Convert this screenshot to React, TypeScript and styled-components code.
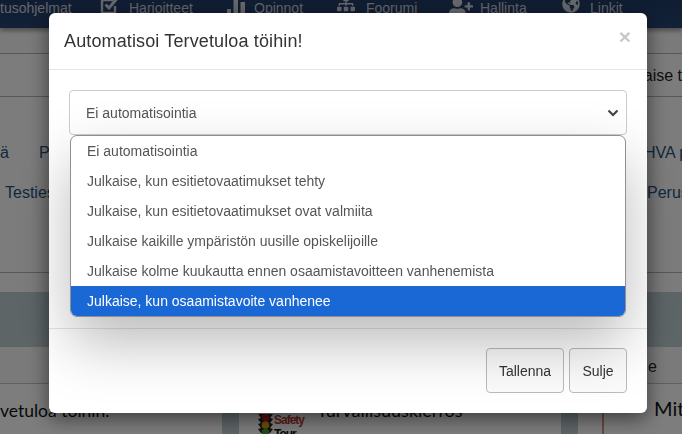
import { createGlobalStyle, styled } from 'styled-components';
import { FaSitemap, FaUserPlus, FaGlobeAmericas } from 'react-icons/fa';

const GlobalStyle = createGlobalStyle`
  html, body {
    margin: 0;
    height: 434px;
    overflow: hidden;
    background: #fff;
    font-family: "Liberation Sans", Arial, sans-serif;
  }
`;

const Page = styled.div`
  width: 682px;
  height: 434px;
  overflow: hidden;
  color: #222;
`;

const Nav = styled.nav`
  display: flex;
  height: 28px;
  overflow: hidden;
  background: linear-gradient(#1f3a66, #27436f);
  box-shadow: 0 3px 4px rgba(0, 0, 0, 0.35);
  position: relative;
`;

interface NavItemProps {
  $width: number;
  $gap?: number;
}

const NavItem = styled.div<NavItemProps>`
  flex: 0 0 ${({ $width }) => $width}px;
  display: flex;
  align-items: flex-start;
  gap: ${({ $gap = 11 }) => $gap}px;
  font-size: 14px;
  line-height: 17px;
  color: #c8ced5;
  white-space: nowrap;

  svg {
    flex: none;
    margin-top: -5px;
    color: #cfd4da;
  }
`;

const TopRow = styled.div`
  height: 25px;
  background: #f4f4f4;
  border-bottom: 1px solid #b0b0b0;
`;

const TitleRow = styled.div`
  height: 43px;
  display: flex;
  justify-content: flex-end;
  align-items: center;
  padding-top: 1px;
  box-sizing: border-box;
  background: #f8f8f8;
  border-bottom: 1px solid #b0b0b0;
  font-size: 16px;
  overflow: hidden;
`;

const TitleEnd = styled.span`
  flex: 0 0 35px;
  white-space: nowrap;
`;

const LinkPanel = styled.div`
  height: 176px;
  display: flex;
  flex-flow: column nowrap;
  gap: 21px;
  padding-top: 46px;
  box-sizing: border-box;
  background: #f8f8f8;
  border-bottom: 1px solid #b0b0b0;
`;

interface LinkRowProps {
  $columns: string;
}

const LinkRow = styled.div<LinkRowProps>`
  display: grid;
  grid-template-columns: ${({ $columns }) => $columns};
  font-size: 16px;
  line-height: 19px;
  color: #24527f;
  white-space: nowrap;
  overflow: hidden;
`;

const Spacer = styled.div`
  height: 19px;
  background: #f8f8f8;
`;

const TealBand = styled.div`
  height: 55px;
  background: #bccbce;
`;

const NoteRow = styled.div`
  height: 37px;
  display: flex;
  justify-content: flex-end;
  padding: 11px 0 0;
  box-sizing: border-box;
  background: #f4f4f4;
  border-bottom: 1px solid #c0c0c0;
  font-size: 16px;
`;

const NoteEnd = styled.span`
  flex: 0 0 34px;
`;

const Tiles = styled.div`
  display: grid;
  grid-template-columns: 222px 322px 1fr;
  gap: 17px;
  height: 60px;
  background: #bccbce;
`;

const Tile = styled.div`
  display: flex;
  background: #fbfbfb;
  overflow: hidden;
`;

interface TileTextProps {
  $size?: number;
}

const TileText = styled.span<TileTextProps>`
  font-family: Lato, "Open Sans", sans-serif;
  font-size: ${({ $size = 20 }) => $size}px;
  line-height: 24px;
  color: #111;
  white-space: nowrap;
`;

const FirstTile = styled(Tile)`
  padding: 15px 0 0 0;
`;

const SafetyTile = styled(Tile)`
  padding: 14px 0 0 18px;
  gap: 13px;
`;

const Logo = styled.div`
  flex: 0 0 44px;
  display: flex;
  gap: 0;
  padding-top: 15px;
`;

const LogoWords = styled.div`
  font-size: 12px;
  line-height: 14px;
  font-weight: bold;
  letter-spacing: -1px;
  color: #111;
`;

const LogoRed = styled.div`
  color: #c0392b;
`;

const ThirdTile = styled(Tile)`
  padding: 12px 0 0 23px;
  gap: 49px;
`;

const ThinMark = styled.svg`
  flex: none;
  width: 4px;
  height: 48px;
`;

const Backdrop = styled.div`
  position: fixed;
  inset: 0;
  padding: 13px 35px 0 49px;
  background: rgba(0, 0, 0, 0.5);
`;

const Modal = styled.div`
  position: relative;
  width: 598px;
  height: 400px;
  display: flex;
  flex-flow: column nowrap;
  background: #fff;
  border-radius: 6px;
  box-shadow: 0 5px 20px rgba(0, 0, 0, 0.55);
`;

const ModalHeader = styled.div`
  flex: 0 0 57px;
  box-sizing: border-box;
  display: flex;
  justify-content: space-between;
  padding: 15px 16px 0 15px;
  border-bottom: 1px solid #e5e5e5;
`;

const ModalTitle = styled.h4`
  margin: 1px 0 0;
  font-size: 18px;
  font-weight: normal;
  line-height: 25px;
  letter-spacing: 0.13px;
  color: #333;
`;

const CloseButton = styled.span`
  font-size: 21px;
  font-weight: bold;
  line-height: 18px;
  color: #c8c8c8;
`;

const ModalBody = styled.div`
  flex: 0 0 259px;
  box-sizing: border-box;
  padding: 20px 20px 0;
  border-bottom: 1px solid #e5e5e5;
`;

const SelectBox = styled.div`
  position: relative;
  height: 45px;
  box-sizing: border-box;
  display: flex;
  align-items: center;
  justify-content: space-between;
  padding: 0 7px 0 16px;
  border: 1px solid #ccc;
  border-radius: 4px;
  font-size: 14px;
  color: #555;
`;

const Chevron = styled.svg`
  width: 12px;
  height: 8px;
`;

const Dropdown = styled.ul`
  position: absolute;
  top: 44px;
  left: 0;
  right: 0;
  margin: 0;
  padding: 0;
  list-style: none;
  overflow: hidden;
  background: #fff;
  border: 1px solid #8f8f8f;
  border-radius: 7px;
  box-shadow: 0 26px 58px rgba(0, 0, 0, 0.27);
`;

interface OptionProps {
  $active?: boolean;
}

const Option = styled.li<OptionProps>`
  height: 30px;
  line-height: 30px;
  padding: 0 16px;
  font-size: 14px;
  white-space: nowrap;
  color: ${({ $active }) => ($active ? '#fff' : '#555')};
  background: ${({ $active }) => ($active ? '#1a68d6' : 'transparent')};
`;

const ModalFooter = styled.div`
  flex: 1;
  display: flex;
  justify-content: flex-end;
  align-items: flex-start;
  gap: 5px;
  padding: 19px 20px 0;
`;

interface ButtonProps {
  $width: number;
}

const Button = styled.button<ButtonProps>`
  width: ${({ $width }) => $width}px;
  height: 45px;
  padding: 0;
  font-family: inherit;
  font-size: 14px;
  color: #333;
  background: #fbfbfb;
  border: 1px solid #bbb;
  border-radius: 4px;
`;

const options = [
  'Ei automatisointia',
  'Julkaise, kun esitietovaatimukset tehty',
  'Julkaise, kun esitietovaatimukset ovat valmiita',
  'Julkaise kaikille ympäristön uusille opiskelijoille',
  'Julkaise kolme kuukautta ennen osaamistavoitteen vanhenemista',
  'Julkaise, kun osaamistavoite vanhenee',
];

function CheckIcon() {
  return (
    <svg width="18" height="20" viewBox="0 0 18 20">
      <path d="M13 5H3.5A1.5 1.5 0 0 0 2 6.5v10A1.5 1.5 0 0 0 3.5 18h10a1.5 1.5 0 0 0 1.5-1.5V11" fill="none" stroke="currentColor" strokeWidth="2.4" />
      <path d="M5.5 9.5 9 13l7.5-9" fill="none" stroke="currentColor" strokeWidth="3" />
    </svg>
  );
}

function BarsIcon() {
  return (
    <svg width="20" height="20" viewBox="0 0 20 20" fill="currentColor">
      <rect x="1" y="14" width="4" height="6" />
      <rect x="7.5" y="2" width="4.5" height="18" />
      <rect x="14.5" y="7" width="4.5" height="13" />
    </svg>
  );
}

export default function App(): React.ReactNode {
  return (
    <>
      <GlobalStyle />
      <Page>
        <Nav>
          <NavItem $width={100}>tusohjelmat</NavItem>
          <NavItem $width={126} $gap={11}>
            <CheckIcon />
            Harjoitteet
          </NavItem>
          <NavItem $width={111} $gap={8}>
            <BarsIcon />
            Opinnot
          </NavItem>
          <NavItem $width={112}>
            <FaSitemap size={18} />
            Foorumi
          </NavItem>
          <NavItem $width={113} $gap={7}>
            <FaUserPlus size={24} />
            Hallinta
          </NavItem>
          <NavItem $width={100} $gap={10}>
            <FaGlobeAmericas size={18} />
            Linkit
          </NavItem>
        </Nav>
        <TopRow />
        <TitleRow>
          <TitleEnd>aise t</TitleEnd>
        </TitleRow>
        <LinkPanel>
          <LinkRow $columns="39px 605px 1fr">
            <span>ä</span>
            <span>P</span>
            <span>HVA p</span>
          </LinkRow>
          <LinkRow $columns="5px 642px 1fr">
            <span />
            <span>Testies</span>
            <span>Perus</span>
          </LinkRow>
        </LinkPanel>
        <Spacer />
        <TealBand />
        <NoteRow>
          <NoteEnd>e</NoteEnd>
        </NoteRow>
        <Tiles>
          <FirstTile>
            <TileText $size={17.5}>vetuloa töihin.</TileText>
          </FirstTile>
          <SafetyTile>
            <Logo>
              <svg width="17" height="34" viewBox="0 0 17 34">
                <path d="M1 1h15l-3 4 3 1-3 4 3 1-3 4 3 1-3 4H4l-3-4 3-1-3-4 3-1-3-4 3-1z" fill="#222" />
                <circle cx="8.5" cy="4.5" r="3.8" fill="#b3201c" />
                <circle cx="8.5" cy="12" r="3.8" fill="#d99a10" />
                <circle cx="8.5" cy="19.5" r="3.8" fill="#3f9a28" />
              </svg>
              <LogoWords>
                <LogoRed>Safety</LogoRed>
                Tour
              </LogoWords>
            </Logo>
            <TileText $size={18}>Turvallisuuskierros</TileText>
          </SafetyTile>
          <ThirdTile>
            <ThinMark viewBox="0 0 4 48">
              <path d="M2 0v48" stroke="#b3201c" strokeWidth="1" fill="none" />
            </ThinMark>
            <TileText>Mitt</TileText>
          </ThirdTile>
        </Tiles>
      </Page>
      <Backdrop>
        <Modal>
          <ModalHeader>
            <ModalTitle>Automatisoi Tervetuloa töihin!</ModalTitle>
            <CloseButton>×</CloseButton>
          </ModalHeader>
          <ModalBody>
            <SelectBox>
              Ei automatisointia
              <Chevron viewBox="0 0 12 8">
                <path d="M1.5 1.5 6 6l4.5-4.5" stroke="#444" strokeWidth="2.2" fill="none" />
              </Chevron>
              <Dropdown>
                {options.map((option, index) => (
                  <Option key={option} $active={index === options.length - 1}>
                    {option}
                  </Option>
                ))}
              </Dropdown>
            </SelectBox>
          </ModalBody>
          <ModalFooter>
            <Button $width={78}>Tallenna</Button>
            <Button $width={58}>Sulje</Button>
          </ModalFooter>
        </Modal>
      </Backdrop>
    </>
  );
}
